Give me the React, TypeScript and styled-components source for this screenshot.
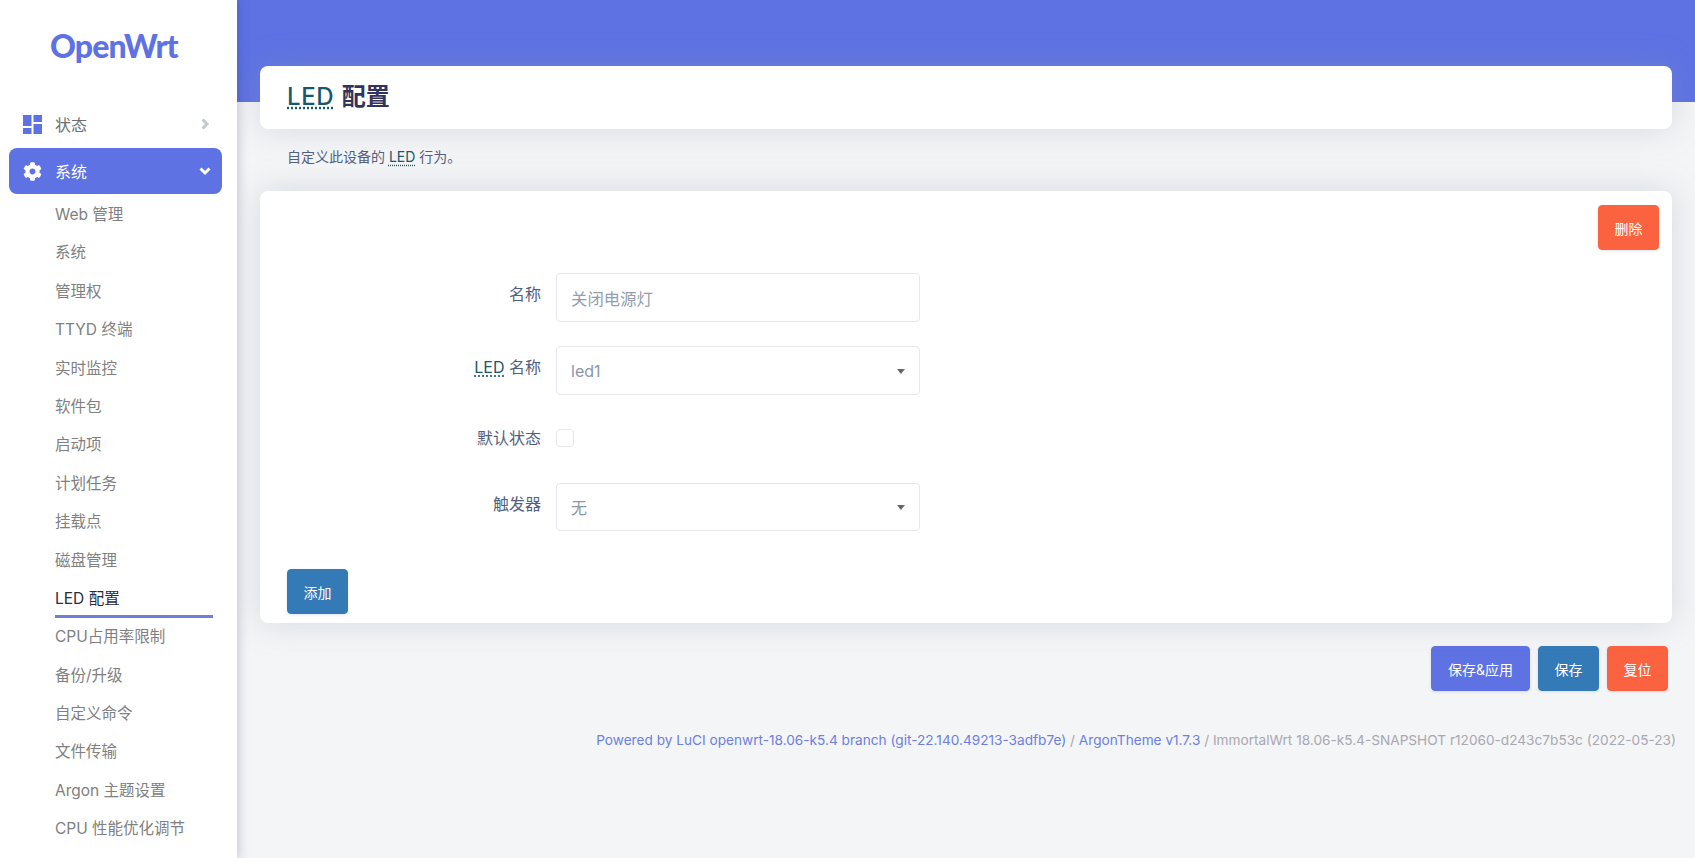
import React from "react";
import styled, { createGlobalStyle } from "styled-components";
import { FaCog } from "react-icons/fa";

const FONT = `Inter, "Noto Sans CJK SC", "Noto Sans", sans-serif`;

const Global = createGlobalStyle`
  html, body { margin: 0; padding: 0; height: 100%; overflow: hidden; background: #f4f5f7; }
  body { font-family: ${FONT}; font-size: 14px; color: #525f7f; }
  * { box-sizing: border-box; }
`;

const Page = styled.div`
  display: flex;
  width: 1695px;
  height: 858px;
  overflow: hidden;
`;

const Sidebar = styled.aside`
  flex: 0 0 237px;
  height: 858px;
  overflow: hidden;
  background: #fff;
  box-shadow: 0 0 10px 2px rgba(50, 50, 93, 0.22);
  position: relative;
  z-index: 2;
`;

const Brand = styled.div`
  height: 101px;
  padding: 24px 0 0 50px;
  font-family: Lato, sans-serif;
  font-weight: 900;
  font-size: 32px;
  letter-spacing: -0.9px;
  line-height: 44px;
  color: #5e72e4;
`;

const Nav = styled.nav`
  padding: 0 15px 0 9px;
`;

const NavRow = styled.div<{ $active?: boolean }>`
  display: flex;
  align-items: center;
  height: 46px;
  padding: 0 11px 0 14px;
  border-radius: 8px;
  font-size: 16px;
  color: ${(p) => (p.$active ? "#fff" : "#6f6f6f")};
  background: ${(p) => (p.$active ? "#5e72e4" : "transparent")};
  margin-bottom: ${(p) => (p.$active ? "0" : "1px")};
`;

const NavIcon = styled.span`
  flex: 0 0 19px;
  width: 19px;
  height: 19px;
  margin-right: 13px;
  display: flex;
  align-items: center;
  justify-content: center;
`;

const NavText = styled.span`
  flex: 1;
`;

const SubList = styled.ul`
  list-style: none;
  margin: 0;
  padding: 2px 24px 0 55px;
`;

const SubItem = styled.li<{ $active?: boolean }>`
  height: 38.4px;
  line-height: 38.4px;
  font-size: 15.5px;
  white-space: nowrap;
  color: ${(p) => (p.$active ? "#2b2b3d" : "#808080")};
  box-shadow: ${(p) => (p.$active ? "inset 0 -3px 0 #6f7fd8" : "none")};
`;

const Main = styled.main`
  flex: 1;
  min-width: 0;
`;

const Band = styled.div`
  height: 102px;
  background: #5e72e4;
`;

const Content = styled.div`
  margin-top: -36px;
  padding: 0 23px;
`;

const TitleCard = styled.div`
  height: 63px;
  padding: 0 27px 7px;
  display: flex;
  align-items: center;
  background: #fff;
  border-radius: 8px;
  box-shadow: 0 0 32px rgba(136, 152, 170, 0.3);
`;

const Title = styled.h2`
  margin: 0;
  font-size: 24px;
  font-weight: 700;
  color: #32325d;
`;

const TitleAbbr = styled.abbr`
  color: #17596b;
  font-weight: 500;
  letter-spacing: 0.6px;
  margin-right: 2px;
  text-decoration: underline dotted;
  text-underline-offset: 3px;
`;

const Abbr = styled.abbr`
  color: #17596b;
  text-decoration: underline dotted;
  text-underline-offset: 3px;
`;

const Desc = styled.p`
  margin: 0;
  height: 62px;
  padding: 18px 27px 0;
  font-size: 14px;
  line-height: 20px;
  color: #525f7f;
`;

const Card = styled.section`
  position: relative;
  height: 432px;
  padding: 14px 13px 9px 27px;
  display: flex;
  flex-direction: column;
  background: #fff;
  border-radius: 8px;
  box-shadow: 0 0 32px rgba(136, 152, 170, 0.3);
`;

const TopAction = styled.div`
  display: flex;
  justify-content: flex-end;
  height: 45px;
`;

const Form = styled.div`
  display: flex;
  flex-direction: column;
  margin-top: 23px;
  margin-left: -27px;
`;

const Field = styled.div<{ $h: number; $mb: number }>`
  display: flex;
  align-items: flex-start;
  height: ${(p) => p.$h}px;
  margin-bottom: ${(p) => p.$mb}px;
`;

const Label = styled.label`
  width: 296px;
  padding-right: 15px;
  padding-top: 9px;
  text-align: right;
  font-size: 16px;
  line-height: 24px;
  color: #525f7f;
`;

const CheckLabel = styled(Label)`
  padding-top: 0;
  line-height: 18px;
`;

const InputBox = styled.div`
  position: relative;
  display: flex;
  align-items: center;
  width: 364px;
  height: 100%;
  padding: 0 14px;
  background: #fff;
  border: 1px solid #e4e7ee;
  border-radius: 4px;
  font-size: 16px;
  color: #8898aa;
`;

const Placeholder = styled.span`
  color: #939eae;
  font-size: 16.4px;
`;

const Caret = styled.span`
  position: absolute;
  right: 14px;
  top: 50%;
  margin-top: -2px;
  width: 0;
  height: 0;
  border-left: 4px solid transparent;
  border-right: 4px solid transparent;
  border-top: 5px solid #666;
`;

const Check = styled.span`
  display: block;
  width: 18px;
  height: 18px;
  border: 1px solid #e4e7ee;
  border-radius: 4px;
  background: #fff;
`;

const Button = styled.button<{ $bg: string; $w: number }>`
  width: ${(p) => p.$w}px;
  height: 45px;
  padding: 0;
  border: 1px solid ${(p) => p.$bg};
  border-radius: 4px;
  background: ${(p) => p.$bg};
  color: #fff;
  font-family: ${FONT};
  font-size: 14px;
  box-shadow: 0 1px 3px rgba(50, 50, 93, 0.12);
`;

const AddRow = styled.div`
  margin-top: auto;
`;

const Actions = styled.div`
  display: flex;
  justify-content: flex-end;
  gap: 8px;
  padding: 23px 4px 0 0;
`;

const Footer = styled.footer`
  margin: 39px -4px 0 0;
  text-align: right;
  font-size: 13.65px;
  line-height: 20px;
  white-space: nowrap;
  color: #a8a8b0;
`;

const FooterLink = styled.span`
  color: #6d7fe0;
`;

const subItems = [
  "Web 管理", "系统", "管理权", "TTYD 终端", "实时监控", "软件包", "启动项", "计划任务",
  "挂载点", "磁盘管理", "LED 配置", "CPU占用率限制", "备份/升级", "自定义命令", "文件传输",
  "Argon 主题设置", "CPU 性能优化调节",
];

const DashIcon = () => (
  <svg width="19" height="19" viewBox="0 0 19 19" fill="#5e72e4">
    <rect x="0" y="0" width="8.5" height="11" />
    <rect x="10.5" y="0" width="8.5" height="7" />
    <rect x="0" y="13" width="8.5" height="6" />
    <rect x="10.5" y="9" width="8.5" height="10" />
  </svg>
);

const Chevron = ({ dir, color }: { dir: "right" | "down"; color: string }) => (
  <svg width="12" height="12" viewBox="0 0 12 12" fill="none" stroke={color} strokeWidth="3">
    <path d={dir === "right" ? "M3.5 1.5 L8 6 L3.5 10.5" : "M1.5 3.5 L6 8 L10.5 3.5"} />
  </svg>
);

export default function App() {
  return (
    <Page>
      <Global />
      <Sidebar>
        <Brand>OpenWrt</Brand>
        <Nav>
          <NavRow>
            <NavIcon><DashIcon /></NavIcon>
            <NavText>状态</NavText>
            <Chevron dir="right" color="#c4c8cf" />
          </NavRow>
          <NavRow $active>
            <NavIcon><FaCog size={19} color="#fff" /></NavIcon>
            <NavText>系统</NavText>
            <Chevron dir="down" color="#fff" />
          </NavRow>
        </Nav>
        <SubList>
          {subItems.map((s) => (
            <SubItem key={s} $active={s === "LED 配置"}>{s}</SubItem>
          ))}
        </SubList>
      </Sidebar>
      <Main>
        <Band />
        <Content>
          <TitleCard>
            <Title><TitleAbbr>LED</TitleAbbr> 配置</Title>
          </TitleCard>
          <Desc>自定义此设备的 <Abbr>LED</Abbr> 行为。</Desc>
          <Card>
            <TopAction><Button $bg="#fb6340" $w={61}>删除</Button></TopAction>
            <Form>
              <Field $h={49} $mb={24}>
                <Label>名称</Label>
                <InputBox><Placeholder>关闭电源灯</Placeholder></InputBox>
              </Field>
              <Field $h={49} $mb={34}>
                <Label><Abbr>LED</Abbr> 名称</Label>
                <InputBox>led1<Caret /></InputBox>
              </Field>
              <Field $h={18} $mb={36}>
                <CheckLabel>默认状态</CheckLabel>
                <Check />
              </Field>
              <Field $h={48} $mb={0}>
                <Label>触发器</Label>
                <InputBox>无<Caret /></InputBox>
              </Field>
            </Form>
            <AddRow><Button $bg="#337ab7" $w={61}>添加</Button></AddRow>
          </Card>
          <Actions>
            <Button $bg="#5e72e4" $w={99}>保存&amp;应用</Button>
            <Button $bg="#337ab7" $w={61}>保存</Button>
            <Button $bg="#fb6340" $w={61}>复位</Button>
          </Actions>
          <Footer>
            <FooterLink>Powered by LuCI openwrt-18.06-k5.4 branch (git-22.140.49213-3adfb7e)</FooterLink>
            {" / "}
            <FooterLink>ArgonTheme v1.7.3</FooterLink>
            {" / ImmortalWrt 18.06-k5.4-SNAPSHOT r12060-d243c7b53c (2022-05-23)"}
          </Footer>
        </Content>
      </Main>
    </Page>
  );
}
